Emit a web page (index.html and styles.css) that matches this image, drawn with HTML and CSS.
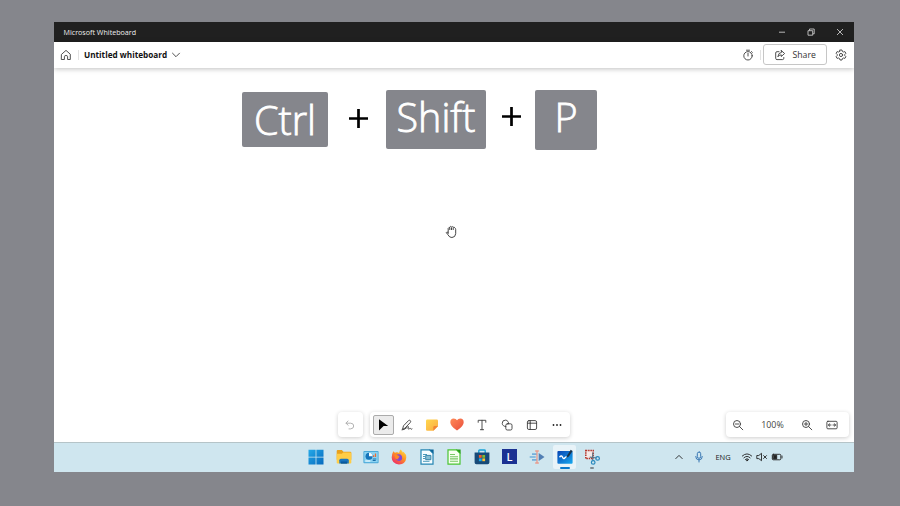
FILE: index.html
```html
<!DOCTYPE html>
<html lang="en">
<head>
<meta charset="utf-8">
<title>Microsoft Whiteboard</title>
<link rel="stylesheet" href="styles.css">
</head>
<body>
<div class="window">
  <div class="titlebar">
    <span class="app-name">Microsoft Whiteboard</span>
    <div class="controls">
      <svg viewBox="0 0 10 10"><path d="M2 5.2h6"/></svg>
      <svg viewBox="0 0 10 10"><path d="M2 3.7h4.7v4.5H2zM3.5 3.5V2h4.7v4.8H7"/></svg>
      <svg viewBox="0 0 10 10"><path d="M2 2l6 6M8 2l-6 6"/></svg>
    </div>
  </div>
  <header class="header">
    <svg class="ic home" viewBox="0 0 12 12"><path d="M1.7 5.2L6 1.4l4.3 3.8v5.3H7.6V7.6Q7.6 6.5 6 6.5T4.4 7.6v2.9H1.7z"/></svg>
    <span class="sep"></span>
    <span class="board-name">Untitled whiteboard</span>
    <svg class="ic chevron" viewBox="0 0 12 12"><path d="M2.5 4.2L6 7.7l3.5-3.5"/></svg>
    <svg class="ic timer" viewBox="0 0 12 12"><circle cx="6" cy="6.8" r="4.2"/><path d="M4.5 1.2h3M6 4.3v2.7M9.4 2.5l1 1"/></svg>
    <span class="sep sep-right"></span>
    <button class="share"><svg class="ic" viewBox="0 0 12 12"><path d="M5 2.7H3Q1.7 2.7 1.7 4v5.3q0 1.3 1.3 1.3h5.5q1.3 0 1.3-1.3V8.5M7.3 1.5l3.3 3-3.3 3V5.9Q5 5.8 3.9 7.8 4.2 3.7 7.3 3.3z"/></svg>Share</button>
    <svg class="ic gear" viewBox="0 0 12 12"><path d="M5 1h2l.4 1.5 1 .5 1.5-.4 1 1.7L9.8 5.4v1.2l1.1 1.1-1 1.7L8.4 9l-1 .6L7 11H5l-.4-1.4-1-.6-1.5.4-1-1.7 1.1-1.1V5.4L1.1 4.3l1-1.7 1.5.4 1-.5z"/><circle cx="6" cy="6" r="1.6"/></svg>
  </header>
  <main class="canvas">
    <div class="shortcut">
      <kbd class="key ctrl">Ctrl</kbd>
      <svg class="plus first" viewBox="0 0 19 19"><path d="M0 9.5h19M9.5 0v19"/></svg>
      <kbd class="key shift">Shift</kbd>
      <svg class="plus second" viewBox="0 0 19 19"><path d="M0 9.5h19M9.5 0v19"/></svg>
      <kbd class="key letter">P</kbd>
    </div>
    <svg class="hand" viewBox="0 0 12 14"><path d="M3.2 8.8V3.3q.7-1.4 1.5-.2V2q.9-1.2 1.7 0 .9-1 1.7.3 1.2-.7 1.8.8.8.2.8 1.5v4.1q-.3 3.7-3.8 3.8-2.4.2-4-2.8L1.3 7.6q.3-1.3 1.9 0"/><path d="M4.8 3v2M6.5 2.5V5M8.2 2.8V5"/></svg>
    <div class="tools">
      <div class="panel undo"><svg class="ic" viewBox="0 0 12 12"><path d="M4 2L2 4.2l2.2 2.1M2.1 4.2h4.6q3 .1 3 2.8T6.5 9.9H5"/></svg></div>
      <div class="panel toolbar">
        <div class="tool selected"><svg viewBox="0 0 12 12"><path d="M2 .3L11.2 7H6.6L2 11.6z" fill="#000"/></svg></div>
        <div class="tool"><svg class="ic" viewBox="0 0 12 12"><path d="M1.6 9.9l.9-3.1L7.5 1.6q1.2-.8 1.9.1t-.2 1.9L4.2 8.9zM1 10.9q2.4-.1 4-1.7t2.4-1.6c.9.5-1 1.9-.2 2.4s1.9-1.3 2.3-.6.3 1.3 1.5.5"/></svg></div>
        <div class="tool"><svg viewBox="0 0 12 12"><defs><linearGradient id="note" x2="1" y2="1"><stop stop-color="#ffd84e"/><stop offset="1" stop-color="#fbaa42"/></linearGradient></defs><path d="M1.2.5h9.6q1.2 0 1.2 1.2v5.6L7.4 11.7H1.2Q0 11.7 0 10.5V1.7Q0 .5 1.2.5" fill="url(#note)"/><path d="M12 7.1l-4.7 4.6V8.2q0-1.1 1.1-1.1z" fill="#f18435"/></svg></div>
        <div class="tool"><svg class="heart" viewBox="0 0 14 13"><defs><linearGradient id="love" x2="1" y2="1"><stop stop-color="#ff8957"/><stop offset="1" stop-color="#e94e3d"/></linearGradient></defs><path d="M7 12.4Q.3 8.3.3 4.2.4.6 3.7.6 6 .6 7 2.2 8 .6 10.3.6q3.3 0 3.4 3.6Q13.7 8.3 7 12.4" fill="url(#love)"/></svg></div>
        <div class="tool"><svg class="ic" viewBox="0 0 12 12"><path d="M2.2 3.3v-2h7.6v2M6 1.3v9.4M4.4 10.7h3.2"/></svg></div>
        <div class="tool"><svg class="ic" viewBox="0 0 12 12"><path d="M4.8 7.5A3.2 3.2 0 1 1 7.6 4.8"/><rect x="4.8" y="4.8" width="6.2" height="6.2" rx="1.5"/></svg></div>
        <div class="tool"><svg class="ic" viewBox="0 0 12 12"><rect x="1.4" y="1.6" width="9.2" height="8.9" rx="1.5"/><path d="M4.2 1.6v8.9M4.2 4.2h6.4M1.4 4.2h2.8"/></svg></div>
        <div class="tool"><svg viewBox="0 0 12 12"><g fill="#222"><circle cx="2.5" cy="6" r=".9"/><circle cx="6" cy="6" r=".9"/><circle cx="9.5" cy="6" r=".9"/></g></svg></div>
      </div>
      <div class="panel zoom">
        <svg class="ic" viewBox="0 0 12 12"><circle cx="5" cy="5" r="3.5"/><path d="M7.6 7.6l3.2 3.2M3.4 5h3.2"/></svg>
        <span>100%</span>
        <svg class="ic" viewBox="0 0 12 12"><circle cx="5" cy="5" r="3.5"/><path d="M7.6 7.6l3.2 3.2M3.3 5h3.4M5 3.3v3.4"/></svg>
        <svg class="ic" viewBox="0 0 12 12"><rect x=".9" y="2.3" width="10.2" height="7.5" rx="1"/><path d="M5 6H2.4M7 6h2.6M3.8 4.7L2.4 6l1.4 1.3M8.2 4.7L9.6 6 8.2 7.3"/></svg>
      </div>
    </div>
  </main>
  <footer class="taskbar">
    <div class="apps">
      <div class="app"><svg viewBox="0 0 16 16"><defs><linearGradient id="win" x2="1" y2="1"><stop stop-color="#25a9e8"/><stop offset="1" stop-color="#0669bd"/></linearGradient></defs><path d="M.5.8h7.1v7H.5zM8.4.8h7.1v7H8.4zM.5 8.6h7.1v7H.5zM8.4 8.6h7.1v7H8.4z" fill="url(#win)"/></svg></div>
      <div class="app"><svg viewBox="0 0 16 16"><path d="M.7 2Q.7 1 1.7 1h4.1L7.5 2.8h6.8q1 0 1 1v7H.7z" fill="#e9a11c"/><path d="M.7 4.7h5.1l1.4-1.2h7.1q1 0 1 1v9.3q0 .8-1 .8H1.7q-1 0-1-.8z" fill="#ffcd46"/><path d="M3.3 14.6v-3.3q0-1.5 1.6-1.5h6.3q1.6 0 1.6 1.5v3.3z" fill="#1975bd"/><path d="M5 12.5h6v2.1H5z" fill="#08599f"/></svg></div>
      <div class="app"><svg viewBox="0 0 16 16"><rect x=".4" y="2" width="15.2" height="12.2" rx="1" fill="#4ba9d7"/><rect x="1.3" y="3" width="13.4" height="10.2" fill="#8bd3f2"/><circle cx="6" cy="7.2" r="3.5" fill="#1675ba"/><path d="M6 7.2V3.7a3.5 3.5 0 0 1 3.5 3.5z" fill="#f5fbff"/><path d="M10 8V6.2h1.2V8zM11.9 8V4.4h1.2V8z" fill="#e86a32"/><path d="M9.7 10h3.6M9.7 11.5h3" stroke="#176eaa"/><path d="M2.3 12h5" stroke="#fff"/></svg></div>
      <div class="app"><svg viewBox="0 0 16 16"><defs><linearGradient id="fox" x1=".9" y1="0" x2=".2" y2="1"><stop stop-color="#ffe34d"/><stop offset=".45" stop-color="#ff9422"/><stop offset="1" stop-color="#ed256c"/></linearGradient></defs><path d="M2.3 2.2l1.6 1.5 1.7-.5Q7.2 2.9 8 4l1.2-3.5q2.2 1.1 2.6 3l.7-.8q3 2.5 2.8 6Q14.6 15.2 8 15.4.9 15 .7 8.5.7 5.2 2.3 2.2" fill="url(#fox)"/><path d="M5 5.9q2.1-1.3 4.4-.3 2 1.3 1.8 3.6-.4 2.7-3.3 2.8-2.5 0-3.2-2.4l2.7-.4 1.2-1.4-2.7-.6z" fill="#8245d4"/><path d="M3.2 5.7l2.7-.3.8 1.2 2 .3-1.5 1.3-.5 1.2 1.3.5q-2.2 1.2-3.7-.8z" fill="#ff8b24"/></svg></div>
      <div class="app"><svg viewBox="0 0 16 16"><path d="M2 .8h8.5L14 4.3v10.9H2z" fill="#f5fcff" stroke="#2585b2" stroke-width="1.2"/><path d="M10.2.4L14.6.4v4.4z" fill="#0b6499"/><path d="M4 5.5h4M4 7.5h2M4 9.5h2M4 12.3h6.5" stroke="#4b9abb"/><path d="M6.7 6.4h5.2v4.3H6.7z" fill="#86bdd2" stroke="#2d7da3" stroke-width=".9"/></svg></div>
      <div class="app"><svg viewBox="0 0 16 16"><path d="M2 .8h8.5L14 4.3v10.9H2z" fill="#f7fff0" stroke="#49c332" stroke-width="1.2"/><path d="M10.2.4L14.6.4v4.4z" fill="#269c18"/><path d="M4 5.5h5M4 7.7h8M4 9.9h8M4 12.3h8" stroke="#76c862" stroke-width="1.1"/></svg></div>
      <div class="app"><svg viewBox="0 0 16 16"><path d="M4.8 4V1.7q0-.7.8-.7h4.8q.8 0 .8.7V4" fill="none" stroke="#18a2d8" stroke-width="1.4"/><path d="M.6 3.5h14.8v10q0 1.8-1.8 1.8H2.4q-1.8 0-1.8-1.8z" fill="#174a78"/><path fill="#f15b2a" d="M4.9 6h2.8v2.8H4.9z"/><path fill="#7dbb30" d="M8.3 6h2.8v2.8H8.3z"/><path fill="#1ba9e9" d="M4.9 9.4h2.8v2.8H4.9z"/><path fill="#ffc12e" d="M8.3 9.4h2.8v2.8H8.3z"/></svg></div>
      <div class="app"><span class="tile">L</span></div>
      <div class="app"><svg viewBox="0 0 16 16"><path d="M3 5.2h5M.7 8h6M3 10.8h5" stroke="#74aedb" stroke-width="1.7"/><path d="M9.7 4L15.5 8l-5.8 4z" fill="#527fb4"/><path d="M6.2 2h3.6M8 2v12M6.2 14h3.6" stroke="#e99b8d" stroke-width="1.3" fill="none"/></svg></div>
      <div class="app active"><svg viewBox="0 0 16 16"><defs><linearGradient id="wb" x2="1" y2="1"><stop stop-color="#0744b4"/><stop offset="1" stop-color="#16a8ee"/></linearGradient></defs><rect x=".4" y="2" width="15.2" height="12.7" rx="1" fill="url(#wb)"/><path d="M2.5 8.2q1.8-2 2.6-.8c.8 1.1.7 2.6 1.8 2.2 1-.4 1.3-1.6 2.7-2" stroke="#fff" stroke-width="1.4" fill="none"/><path d="M9.6 8.8l.5-2.2L13.7.8l1.9 1.1-3.8 5.6z" fill="#17334b"/></svg></div>
      <div class="app running"><svg viewBox="0 0 16 16"><rect x="1.8" y="1.6" width="7.4" height="8" fill="#f5e8e6" stroke="#b53428" stroke-width="1.5" stroke-dasharray="1.5 .8"/><path d="M8.7 3.5v8M5.8 8.2l7 .8" stroke="#5f7484" stroke-width="1.2"/><circle cx="13.6" cy="9.4" r="1.8" fill="none" stroke="#2788bd" stroke-width="1.2"/><circle cx="9.2" cy="13.4" r="1.8" fill="none" stroke="#2788bd" stroke-width="1.2"/></svg></div>
    </div>
    <div class="tray">
      <svg class="ic up" viewBox="0 0 12 12"><path d="M2.8 7.6L6 4.4l3.2 3.2"/></svg>
      <svg class="ic mic" viewBox="0 0 12 12"><rect x="4.3" y="1" width="3.4" height="6.3" rx="1.7"/><path d="M2.7 5.5q0 3.4 3.3 3.4t3.3-3.4M6 8.9V11"/></svg>
      <span class="lang">ENG</span>
      <svg class="ic wifi" viewBox="0 0 12 12"><path d="M1.3 5Q6 .6 10.7 5M2.9 6.8Q6 3.8 9.1 6.8M4.4 8.4Q6 6.8 7.6 8.4"/><circle cx="6" cy="9.3" r=".6"/></svg>
      <svg class="ic volume" viewBox="0 0 12 12"><path d="M1.2 4.5h1.6l2.7-2.2v7.4L2.8 7.6H1.2zM7.6 4.6l2.9 2.9M10.5 4.6L7.6 7.5"/></svg>
      <svg class="ic battery" viewBox="0 0 12 12"><rect x="1.3" y="3.3" width="8.5" height="5.5" rx="1"/><path d="M11 5v2"/><path d="M2.3 4.2h3.4v3.7H2.3z" class="fill"/></svg>
    </div>
  </footer>
</div>
</body>
</html>
```

FILE: styles.css
```css
* { box-sizing: border-box; }
body {
  margin: 0;
  width: 900px;
  height: 506px;
  padding: 22px 46px 34px 54px;
  overflow: hidden;
  background: #85868c;
  font-family: "Open Sans", "Noto Sans", sans-serif;
}
svg { display: block; flex: none; }
.window { height: 450px; display: flex; flex-direction: column; background: #fff; overflow: hidden; }
.ic { width: 12px; height: 12px; fill: none; stroke: #3c3c3c; stroke-width: .9; stroke-linecap: round; stroke-linejoin: round; }

.titlebar { height: 20px; flex: none; display: flex; align-items: center; justify-content: space-between; padding: 0 9.5px; background: #202020; }
.app-name { color: #eee; font-size: 7.15px; line-height: 20px; }
.controls { display: flex; gap: 18.7px; }
.controls svg { width: 10px; height: 10px; fill: none; stroke: #ddd; stroke-width: .8; }

.header { height: 25.5px; flex: none; display: flex; align-items: center; padding: 0 7px 0 6px; box-shadow: 0 1px 5px rgba(0,0,0,.25); position: relative; background: #fff; }
.sep { width: 1px; height: 10px; margin: 0 5px 0 6px; background: #e2e2e2; }
.board-name { font-size: 8.2px; line-height: 12px; font-weight: 700; color: #111; width: 85.5px; white-space: nowrap; }
.timer { margin-left: auto; }
.sep-right { margin: 0 2px 0 6px; }
.share { width: 64px; height: 21px; display: flex; align-items: center; gap: 7px; padding: 0 0 0 10px; margin-right: 8.5px; border: 1px solid #c6c6c6; border-radius: 3px; background: #fff; color: #333; font: 8.7px "Open Sans", sans-serif; }

.canvas { flex: 1; display: flex; flex-direction: column; padding: 21px 5px 5px; }
.shortcut { display: flex; align-items: flex-start; height: 63px; padding-left: 183px; }
.key { display: block; flex: none; border-radius: 2px; background: #85868c; color: #fff; font: 300 39.5px/1 "Open Sans", sans-serif; font-variant-ligatures: none; -webkit-text-stroke: .8px #fff; text-align: center; white-space: nowrap; }
.ctrl { width: 86px; height: 55.5px; margin-top: 3px; line-height: 56px; }
.shift { width: 100px; height: 59px; margin-top: 1px; line-height: 55px; }
.letter { width: 62px; height: 60px; margin-top: 1.5px; line-height: 54px; }
.plus { width: 19px; height: 19px; stroke: #000; stroke-width: 2.7; }
.first { margin: 20px 18px 0 21px; }
.second { margin: 18px 14px 0 16px; }
.hand { width: 12px; height: 14px; margin: 73px 0 0 386px; fill: #fff; stroke: #444; stroke-width: 1; }
.tools { display: flex; margin-top: auto; padding-left: 278.5px; }
.panel { height: 25px; display: flex; align-items: center; border-radius: 4px; background: #fff; box-shadow: 0 1px 4px rgba(0,0,0,.2); }
.undo { width: 25px; justify-content: center; margin-right: 7.5px; }
.undo .ic { stroke: #aaa; }
.toolbar { width: 200px; }
.tool { width: 25px; height: 20px; display: flex; align-items: center; justify-content: center; }
.tool svg { width: 12px; height: 12px; }
.tool .heart { width: 14px; height: 13px; }
.selected { width: 21px; margin: 0 1px 0 2.5px; border: 1px solid #ababab; border-radius: 2px; background: #ebebeb; }
.zoom { width: 123px; margin-left: auto; padding-left: 6px; font-size: 8.9px; color: #444; }
.zoom span { width: 57px; text-align: center; }
.zoom svg:last-child { margin-left: 13px; }

.taskbar { height: 30px; flex: none; display: flex; align-items: center; padding: 0 0 1.5px 248.5px; border-top: 1px solid #b5c4c8; background: #cfe6ef; }
.apps { display: flex; }
.app { width: 27.6px; height: 24px; display: flex; align-items: center; justify-content: center; position: relative; }
.app svg { width: 16px; height: 16px; }
.tile { width: 15px; height: 15px; background: #1b3192; color: #fff; font: 600 11px/15px "Open Sans", sans-serif; text-align: center; }
.active { width: 23.6px; margin: 0 2px; background: #e8f3f8; border-radius: 2px; }
.active::after, .running::after { content: ""; position: absolute; bottom: -.5px; width: 10px; height: 2px; border-radius: 1px; background: #0878cb; }
.running::after { width: 4px; background: #7f8b92; }
.tray { display: flex; align-items: center; margin-left: 67.4px; }
.tray .ic { stroke: #222; }
.tray .mic { margin: 0 10px 0 8px; stroke: #286bad; }
.lang { width: 26px; font-size: 7.5px; color: #222; }
.tray .volume { margin: 0 3px; }
.tray .fill { fill: #222; }
```
